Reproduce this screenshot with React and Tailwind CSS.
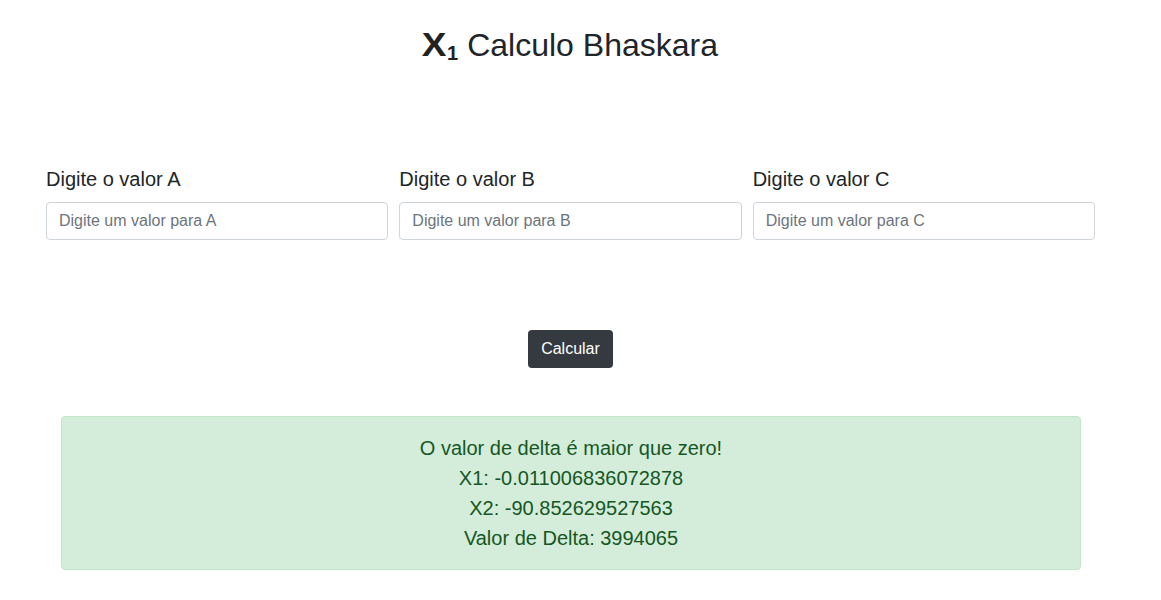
import React, { useState } from 'react';

const fields = [
    { key: 'a', label: 'Digite o valor A', placeholder: 'Digite um valor para A' },
    { key: 'b', label: 'Digite o valor B', placeholder: 'Digite um valor para B' },
    { key: 'c', label: 'Digite o valor C', placeholder: 'Digite um valor para C' },
];

const App = () => {
    const [values, setValues] = useState({ a: '', b: '', c: '' });

    return (
        <div className="min-h-screen bg-white text-[#212529] font-['Liberation_Sans',Arial,sans-serif]">
            <div className="w-[1141px]">
                {/* Title */}
                <h1 className="pt-[26px] flex items-center justify-center gap-[9px] text-[32px] leading-[38px]">
                    <span className="flex items-end font-black text-[#222]">
                        <span className="text-[33px] leading-[38px] scale-x-[1.12]">X</span>
                        <span className="text-[20px] leading-[18px] mb-[2px] ml-[2px]">1</span>
                    </span>
                    <span>Calculo Bhaskara</span>
                </h1>

                {/* Inputs */}
                <div className="mt-[103px] px-[46px] grid grid-cols-3 gap-x-[11px]">
                    {fields.map((f) => (
                        <div key={f.key}>
                            <label className="block text-[20px] leading-[24px]">{f.label}</label>
                            <input
                                type="text"
                                placeholder={f.placeholder}
                                value={values[f.key]}
                                onChange={(e) => setValues({ ...values, [f.key]: e.target.value })}
                                className="mt-[11px] w-full h-[38px] px-[12px] border border-[#ced4da] rounded-[4px] text-[16px] outline-none placeholder:text-[#6c757d]"
                            />
                        </div>
                    ))}
                </div>

                {/* Button */}
                <div className="mt-[90px] flex justify-center">
                    <button className="h-[38px] px-[13px] bg-[#343a40] text-white text-[16px] rounded-[4px]">
                        Calcular
                    </button>
                </div>

                {/* Result */}
                <div className="mt-[48px] ml-[61px] w-[1020px] h-[154px] bg-[#d4edda] border border-[#c3e6cb] rounded-[4px] text-[#155724] text-[20px] leading-[30px] text-center pt-[16px]">
                    <p>O valor de delta é maior que zero!</p>
                    <p>X1: -0.011006836072878</p>
                    <p>X2: -90.852629527563</p>
                    <p>Valor de Delta: 3994065</p>
                </div>
            </div>
        </div>
    );
};

export default App;
